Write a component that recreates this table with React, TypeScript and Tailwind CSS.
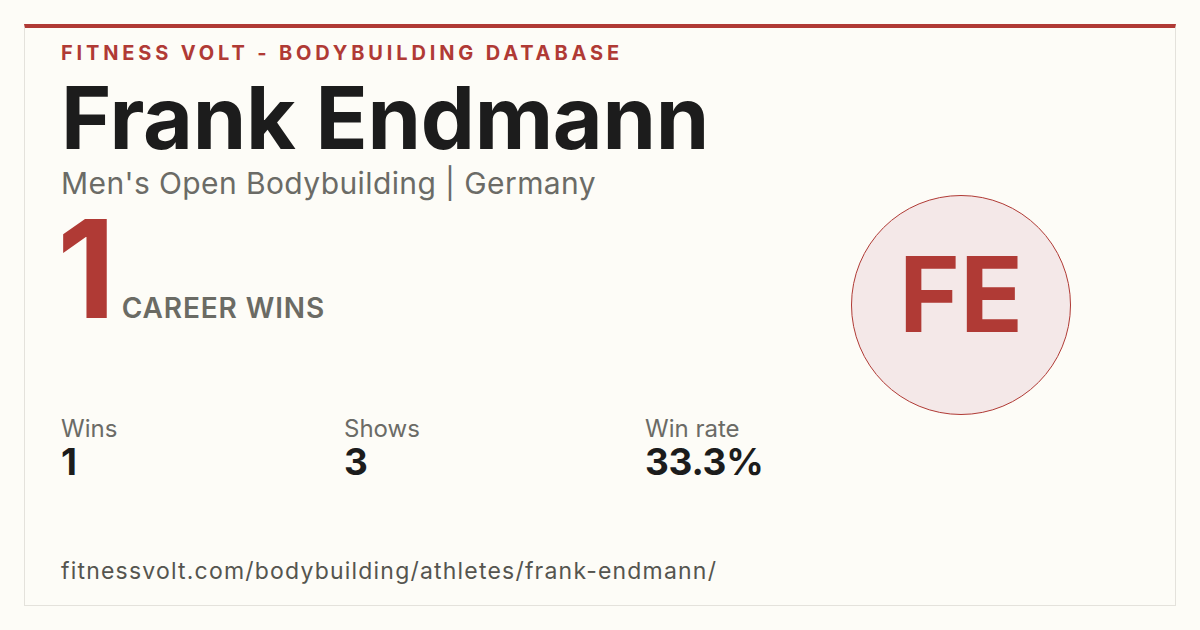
export default function App() {
  const font = { fontFamily: "Inter, 'Noto Sans', sans-serif" };
  const stats = [
    ["Wins", "1", "w-[283px]"],
    ["Shows", "3", "w-[301px]"],
    ["Win rate", "33.3%", "w-[283px]"],
  ];
  return (
    <div className="w-[1200px] h-[630px] bg-[#fdfcf7] p-6" style={font}>
      <div className="h-[582px] border border-[#e4e2dc] border-t-4 border-t-[#b03a35] flex flex-col pl-9 pr-[104px] pt-[10px]">
        <div className="text-[20px] font-bold tracking-[3.85px] text-[#b03a35] leading-[30px]">FITNESS VOLT - BODYBUILDING DATABASE</div>
        <div className="flex justify-between">
          <div className="flex flex-col">
            <h1 className="text-[86px] font-bold text-[#1c1c1c] leading-[100px] tracking-[-0.3px]">Frank Endmann</h1>
            <div className="text-[30px] text-[#6b6b66] leading-[30px] tracking-[0.4px]">Men's Open Bodybuilding | Germany</div>
            <div className="flex items-baseline gap-[12px] mt-[21px] ml-[-4px]">
              <span className="text-[136px] font-bold text-[#b03a35] leading-[100px] tracking-[-6px]">1</span>
              <span className="text-[28px] font-semibold text-[#6b6b64] leading-[30px] tracking-[0.9px]">CAREER WINS</span>
            </div>
          </div>
          <div className="mt-[127px] w-[220px] h-[220px] rounded-full bg-[#f4e8e8] border border-[#b03a35] flex items-center justify-center pb-[22px]">
            <span className="text-[104px] font-bold text-[#b03a35] leading-none">FE</span>
          </div>
        </div>
        <div className="flex mt-0">
          {stats.map(([l, v, w]) => (
            <div key={l} className={w}>
              <div className="text-[24px] text-[#6b6b66] leading-[28px]">{l}</div>
              <div className="text-[37px] font-bold text-[#1c1c1c] leading-[38px] tracking-[-0.3px]">{v}</div>
            </div>
          ))}
        </div>
        <div className="mt-auto mb-[20px] text-[23px] text-[#55554f] leading-[28px] tracking-[1.2px]">fitnessvolt.com/bodybuilding/athletes/frank-endmann/</div>
      </div>
    </div>
  );
}
